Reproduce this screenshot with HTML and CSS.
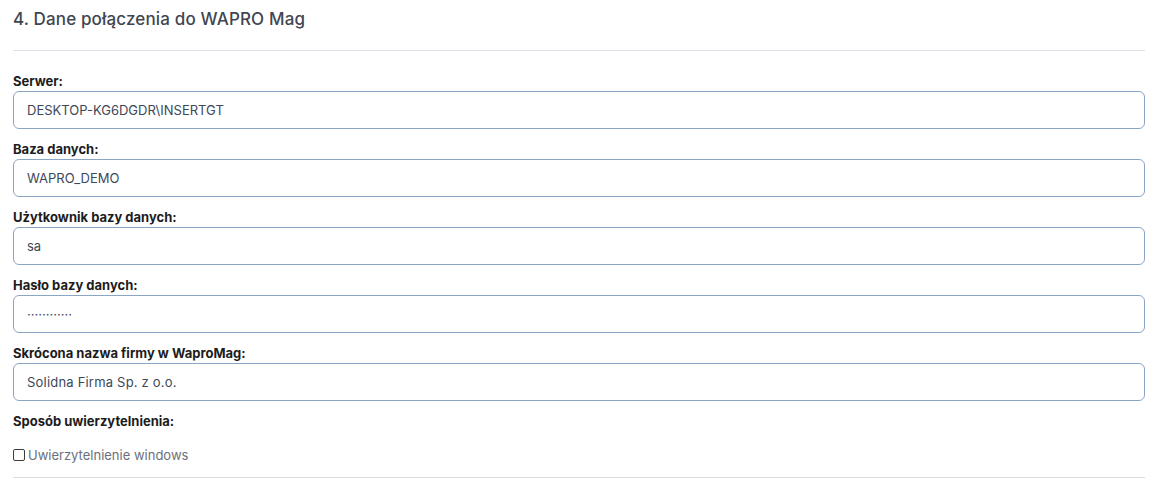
FILE: index.html
```html
<!DOCTYPE html>
<html lang="pl">
<head>
    <meta charset="UTF-8">
    <meta name="viewport" content="width=device-width, initial-scale=1.0">
    <title>Dane połączenia do WAPRO Mag</title>
    <link rel="stylesheet" href="styles.css">
</head>
<body>
    <section class="connection">
        <h2 class="connection__title">4. Dane połączenia do WAPRO Mag</h2>
        <hr class="connection__sep">

        <div class="field">
            <label class="field__label" for="server">Serwer:</label>
            <input class="field__input" id="server" type="text" value="DESKTOP-KG6DGDR\INSERTGT">
        </div>
        <div class="field">
            <label class="field__label" for="database">Baza danych:</label>
            <input class="field__input" id="database" type="text" value="WAPRO_DEMO">
        </div>
        <div class="field">
            <label class="field__label" for="user">Użytkownik bazy danych:</label>
            <input class="field__input" id="user" type="text" value="sa">
        </div>
        <div class="field">
            <label class="field__label" for="password">Hasło bazy danych:</label>
            <input class="field__input" id="password" type="text" value="············">
        </div>
        <div class="field">
            <label class="field__label" for="company">Skrócona nazwa firmy w WaproMag:</label>
            <input class="field__input field__input--wide" id="company" type="text" value="Solidna Firma Sp. z o.o.">
        </div>

        <div class="auth">
            <span class="field__label">Sposób uwierzytelnienia:</span>
            <label class="auth__option">
                <span class="auth__box"></span>
                Uwierzytelnienie windows
            </label>
        </div>
        <hr class="connection__sep connection__sep--bottom">
    </section>
</body>
</html>
```

FILE: styles.css
```css
:root {
    --text-dark: #1c1c1c;
    --title: #3f4650;
    --input-text: #3d4859;
    --input-border: #8ba5c4;
    --sep: #dbe1e8;
    --sep-bottom: #dddddd;
    --muted: #6b6f7c;
    --font-base: 'Inter', 'Open Sans', sans-serif;
}

* {
    box-sizing: border-box;
}

body {
    margin: 0;
    background: #ffffff;
    font-family: var(--font-base);
}

.connection {
    width: 1132px;
    margin-left: 13px;
    padding-top: 8px;
}

.connection__title {
    margin: 0;
    font-size: 17px;
    font-weight: 500;
    line-height: 22px;
    letter-spacing: 0.15px;
    color: var(--title);
}

.connection__sep {
    margin: 20px 0 22px;
    border: 0;
    border-top: 1px solid var(--sep);
}

.connection__sep--bottom {
    margin: 14px 0 0;
    border-top-color: var(--sep-bottom);
}

.field {
    display: flex;
    flex-direction: column;
    margin-bottom: 12px;
}

.field__label {
    display: block;
    font-size: 13px;
    font-weight: 700;
    line-height: 16px;
    color: var(--text-dark);
    margin-bottom: 2px;
}

.field__input {
    height: 38px;
    padding: 0 13px;
    border: 1px solid var(--input-border);
    border-radius: 6px;
    font-family: var(--font-base);
    font-size: 13px;
    color: var(--input-text);
    background: #ffffff;
    outline: none;
}

.field__input--wide {
    letter-spacing: 0.2px;
}

.auth__option {
    display: flex;
    align-items: center;
    gap: 3px;
    margin-top: 18px;
    font-size: 13px;
    font-weight: 400;
    color: var(--muted);
}

.auth__box {
    width: 12px;
    height: 12px;
    border: 1px solid #3c3c3c;
    border-radius: 2px;
    background: #ffffff;
}
```
